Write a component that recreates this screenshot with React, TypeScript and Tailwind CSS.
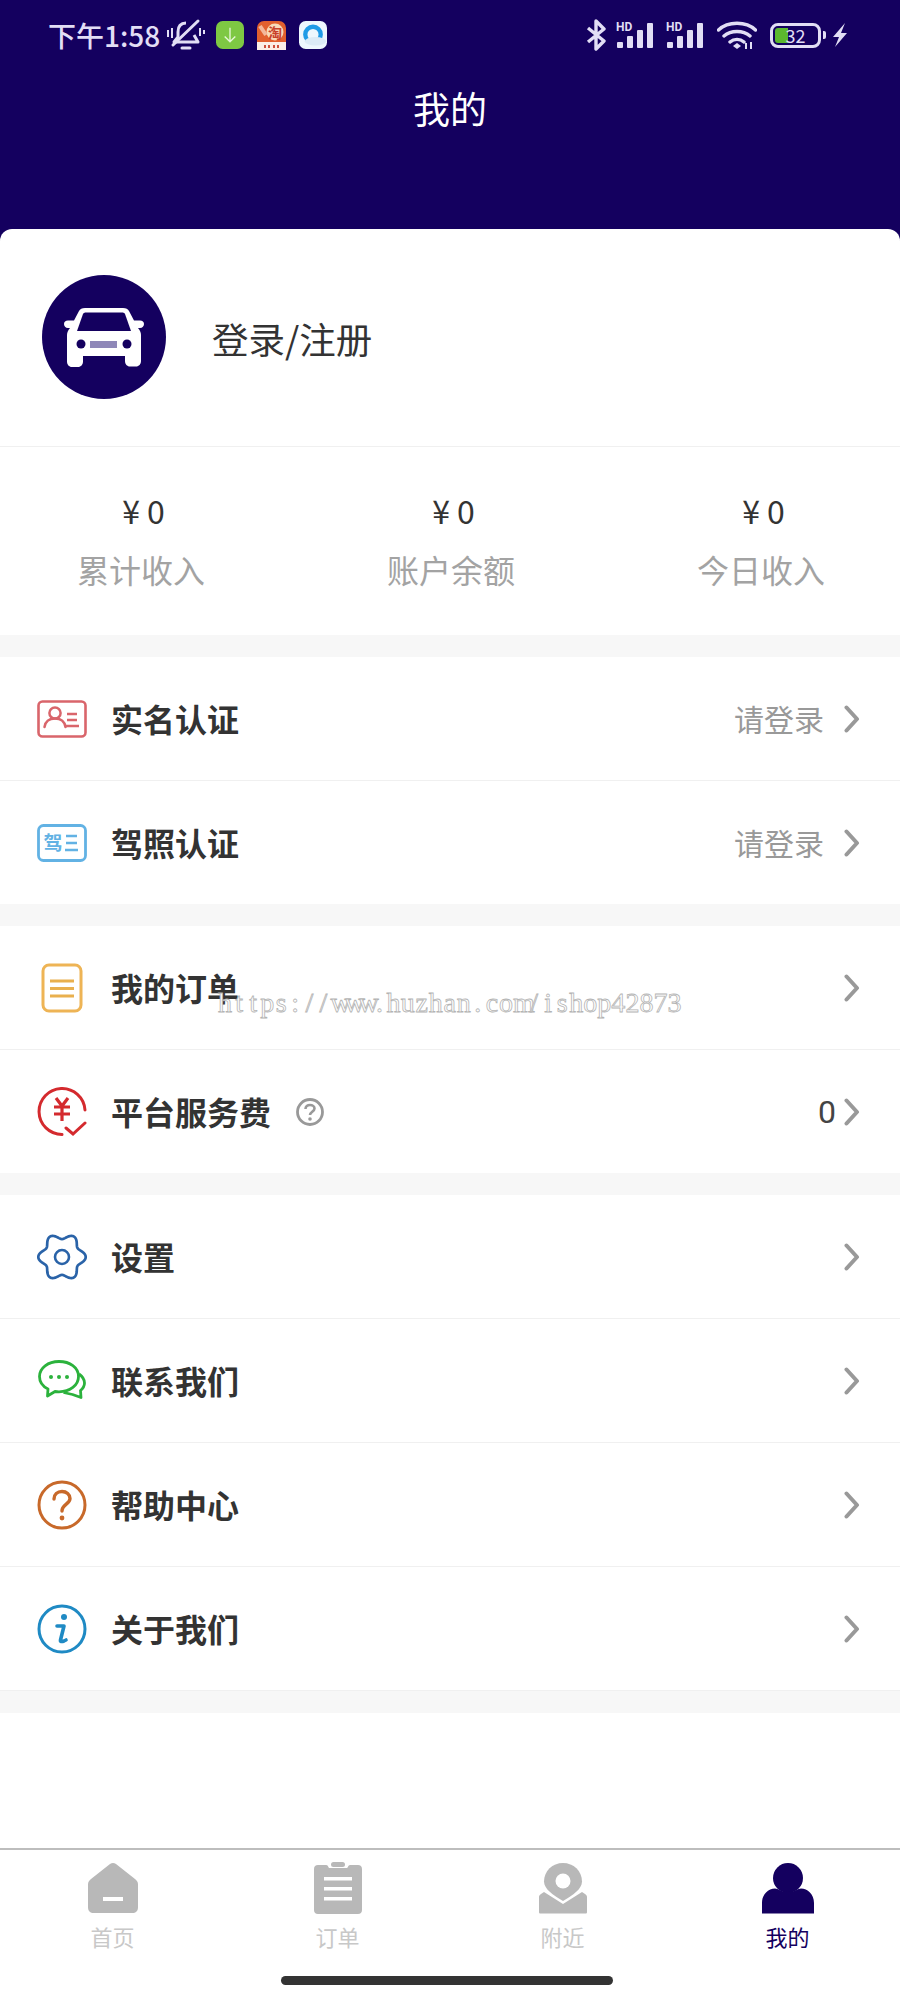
import React from 'react';

const NAVY = '#14005f';

const Chevron = () => (
  <svg width="16" height="28" viewBox="0 0 16 28" fill="none" className="shrink-0">
    <path d="M2.5 2.5 13 14 2.5 25.5" stroke="#999" strokeWidth="4" strokeLinecap="round" strokeLinejoin="round" />
  </svg>
);

const IdIcon = () => (
  <svg width="50" height="38" viewBox="0 0 50 38" fill="none">
    <rect x="1.500" y="1.500" width="47" height="35" rx="4" stroke="#d9656b" strokeWidth="2.600" />
    <circle cx="18" cy="13" r="5.600" stroke="#d9656b" strokeWidth="2.500" />
    <path d="M7.500 27c1-6 5-8.500 10.500-8.500S27.500 21 28.500 27" stroke="#d9656b" strokeWidth="2.500" strokeLinecap="round" />
    <path d="M30 14h10M30 20h10M29 26h13" stroke="#d9656b" strokeWidth="2.500" />
  </svg>
);

const LicenseIcon = () => (
  <svg width="50" height="38" viewBox="0 0 50 38" fill="none">
    <rect x="1.500" y="1.500" width="47" height="35" rx="5" stroke="#62b2e4" strokeWidth="2.800" />
    <text x="6.500" y="26" fontSize="19" fontWeight="700" fill="#62b2e4" fontFamily="'Noto Sans CJK SC', sans-serif">驾</text>
    <path d="M29 12h11M29 19h11M28 26h13" stroke="#62b2e4" strokeWidth="2.500" />
  </svg>
);

const OrderIcon = () => (
  <svg width="42" height="50" viewBox="0 0 42 50" fill="none">
    <rect x="2" y="2" width="38" height="46" rx="6" stroke="#eeb455" strokeWidth="3" />
    <path d="M9 18h24M9 25.500h24M9 33h24" stroke="#e9b04e" strokeWidth="3.200" />
  </svg>
);

const FeeIcon = () => (
  <svg width="50" height="50" viewBox="0 0 50 50" fill="none">
    <path d="M48 23A23 23 0 1 0 25 47.500" stroke="#d42a2e" strokeWidth="3" strokeLinecap="round" />
    <path d="M19 11l6 8 6-8M17 20h16M17 27h16M25 19v15" stroke="#d42a2e" strokeWidth="3.200" />
    <path d="M29 41l7 6 12-11" stroke="#d42a2e" strokeWidth="3" strokeLinecap="round" />
  </svg>
);

// wavy outline with six lobes, one of them pointing right
const gearPath = Array.from({ length: 121 }, (_, i) => {
  const a = (i / 120) * Math.PI * 2;
  const r = 20.8 + 2.9 * Math.cos(6 * a);
  return `${i === 0 ? 'M' : 'L'}${(25 + r * Math.cos(a)).toFixed(2)} ${(25 + r * Math.sin(a)).toFixed(2)}`;
}).join('') + 'Z';

const GearIcon = () => (
  <svg width="50" height="50" viewBox="0 0 50 50" fill="none">
    <path d={gearPath} stroke="#2a63a8" strokeWidth="2.700" strokeLinejoin="round" />
    <circle cx="25" cy="25" r="7" stroke="#2a63a8" strokeWidth="2.600" />
  </svg>
);

const ChatIcon = () => (
  <svg width="48" height="42" viewBox="0 0 48 42" fill="none">
    <path
      d="M21 1.500C10 1.500 1.500 8 1.500 16.500c0 5.500 3.500 10 8.500 12.500l-.5 7 7.500-4.500c1.500.2 2.500.3 4 .3 11 0 19.500-6.500 19.500-15.300S32 1.500 21 1.500z"
      stroke="#2bb23c"
      strokeWidth="2.800"
      strokeLinejoin="round"
    />
    <path d="M41 14c3.500 2.500 5.500 5.500 5.500 9 0 3-1 5-4 7.500l.5 7-8.500-3-9-2" stroke="#2bb23c" strokeWidth="2.800" strokeLinejoin="round" />
    <circle cx="13" cy="17" r="2" fill="#2bb23c" />
    <circle cx="21" cy="17" r="2" fill="#2bb23c" />
    <circle cx="29" cy="17" r="2" fill="#2bb23c" />
  </svg>
);

const HelpIcon = () => (
  <svg width="50" height="50" viewBox="0 0 50 50" fill="none">
    <circle cx="25" cy="25" r="23" stroke="#c8692a" strokeWidth="3" />
    <path d="M17 19c0-4.500 3.500-7.500 8-7.500s8 3 8 7c0 5.500-8 6-8 12.500" stroke="#c8692a" strokeWidth="3.400" strokeLinecap="round" />
    <circle cx="25" cy="38" r="2.400" fill="#c8692a" />
  </svg>
);

const InfoIcon = () => (
  <svg width="50" height="50" viewBox="0 0 50 50" fill="none">
    <circle cx="25" cy="25" r="23" stroke="#1f8ac4" strokeWidth="3" />
    <circle cx="27" cy="13" r="3" fill="#1f8ac4" />
    <path d="M20 22h7l-3.500 14c-.3 1.500 1 2 3.500 1l2-1" stroke="#1f8ac4" strokeWidth="3.600" strokeLinecap="round" strokeLinejoin="round" />
  </svg>
);

const CarIcon = () => (
  <svg width="80" height="60" viewBox="0 0 80 60" fill="none">
    <path
      d="M0 17c0-2 1.500-3.500 4-3.500h6L15 4C16 2 18 1 21 1h38c3 0 5 1 6 3l5 9.500h6c2.500 0 4 1.500 4 3.500s-1.500 4-4 4h-2c2 2.500 3 4.500 3 7v26c0 3-2 5.500-5 5.500h-6c-3 0-5-2.500-5-5.500V49H19v5.500c0 3-2 5.500-5 5.500H8c-3 0-5-2.500-5-5.500V28c0-2.500 1-4.500 3-7H4c-2.500 0-4-2-4-4z"
      fill="#fff"
    />
    <path d="M19 7c.5-1 1.500-1.500 3-1.500h36c1.500 0 2.500.5 3 1.500l6 17H13z" fill={NAVY} />
    <circle cx="17" cy="37" r="4.500" fill={NAVY} />
    <circle cx="63" cy="37" r="4.500" fill={NAVY} />
    <rect x="26" y="34" width="27" height="7" fill="#8f88b8" />
  </svg>
);

const HomeTab = () => (
  <svg width="50" height="52" viewBox="0 0 50 52">
    <path d="M25 1c1 0 2 .4 3 1l19 15c2 1.500 3 3 3 5.500V45c0 4-2 6-6 6H6c-4 0-6-2-6-6V22.500C0 20 1 18.500 3 17L22 2c1-.6 2-1 3-1z" fill="#b8b8b8" />
    <rect x="15" y="35" width="20" height="4" fill="#fff" />
  </svg>
);

const OrderTab = () => (
  <svg width="48" height="52" viewBox="0 0 48 52">
    <path d="M4 3h8c2 0 2 1.500 3 3h18c1 0 1-3 3-3h8c2.500 0 4 1.500 4 4v41c0 2.500-1.500 4-4 4H4c-2.500 0-4-1.500-4-4V7c0-2.500 1.500-4 4-4z" fill="#b8b8b8" />
    <rect x="17" y="0" width="14" height="5" rx="2.500" fill="#b8b8b8" />
    <rect x="10" y="15" width="28" height="3.500" fill="#fff" />
    <rect x="10" y="25" width="28" height="3.500" fill="#fff" />
    <rect x="10" y="35" width="28" height="3.500" fill="#fff" />
  </svg>
);

const NearbyTab = () => (
  <svg width="48" height="52" viewBox="0 0 48 52">
    <path d="M0 50V35c0-1 .5-2 2-3l3-2 19 12 19-12 3 2c1.500 1 2 2 2 3v15c0 1-.5 1.500-1.500 1.500h-45C.5 51.500 0 51 0 50z" fill="#b8b8b8" />
    <path d="M24 39C14 33 5 27 5 19.500 5 9 13.500 1 24 1s19 8 19 18.500C43 27 34 33 24 39z" fill="#b8b8b8" />
    <circle cx="24" cy="19" r="7.500" fill="#fff" />
  </svg>
);

const MineTab = () => (
  <svg width="52" height="52" viewBox="0 0 52 52">
    <circle cx="26" cy="16" r="15" fill={NAVY} />
    <path d="M0 51.500V41c0-9 6.500-14.500 13-14.500 3 0 6 3.500 13 3.500s10-3.500 13-3.500c6.500 0 13 5.500 13 14.500v10.500z" fill={NAVY} />
  </svg>
);

const SignalIcon = () => (
  <div className="relative ml-[10px] h-[26px] w-[40px]">
    <span className="absolute left-0 top-[-1px] text-[12px] font-bold leading-none" style={{ fontFamily: 'Roboto, sans-serif' }}>HD</span>
    <div className="absolute bottom-0 left-[1px] flex items-end gap-[4px]">
      <div className="h-[6px] w-[6px] rounded-[1px] bg-[#e2def5]" />
      <div className="h-[12px] w-[6px] rounded-[1px] bg-[#e2def5]" />
      <div className="h-[18px] w-[6px] rounded-[1px] bg-[#e2def5]" />
      <div className="h-[25px] w-[6px] rounded-[1px] bg-[#e2def5]" />
    </div>
  </div>
);

const StatusBar = () => (
  <div className="flex h-[70px] items-center justify-between pl-[48px] pr-[52px] text-[#e2def5]">
    <div className="flex items-center">
      <span className="text-[28px] font-medium leading-none">下午1:58</span>
      <svg width="38" height="34" viewBox="0 0 38 34" fill="none" className="ml-[7px]">
        <path d="M19 5c-6 0-8 4-8 9v5l-4 5h24l-4-7" stroke="#e2def5" strokeWidth="3" strokeLinejoin="round" />
        <path d="M6 27 31 3M15 30h8" stroke="#e2def5" strokeWidth="3" strokeLinecap="round" />
        <path d="M1 12v7M5 10v10M33 10v8M37 12v4" stroke="#e2def5" strokeWidth="2" />
      </svg>
      <svg width="28" height="28" viewBox="0 0 29 29" fill="none" className="ml-[11px]">
        <rect width="29" height="29" rx="7" fill="#7ec843" />
        <path d="M14.500 7v14M9 16l5.500 5.500L20 16" stroke="#e5f7d6" strokeWidth="1.400" />
      </svg>
      <svg width="29" height="29" viewBox="0 0 29 29" fill="none" className="ml-[13px]">
        <rect width="29" height="29" rx="7" fill="#e2602e" />
        <rect y="21" width="29" height="8" fill="#fbeee6" />
        <circle cx="18" cy="11" r="8.500" fill="#f8d9b8" />
        <text x="11" y="17" fontSize="14" fontWeight="700" fill="#c8402a" fontFamily="'Noto Sans CJK SC', sans-serif">淘</text>
        <path d="M3 5l6 9" stroke="#f3b79a" strokeWidth="4" />
        <path d="M8 24v3M12 24v3M17 24v3M21 24v3" stroke="#c8402a" strokeWidth="1.800" />
      </svg>
      <svg width="28" height="28" viewBox="0 0 29 29" fill="none" className="ml-[13px]">
        <rect width="29" height="29" rx="7" fill="#eef7fd" />
        <circle cx="14.500" cy="14" r="8" stroke="#1f9be6" strokeWidth="4.500" />
        <ellipse cx="17" cy="21" rx="11" ry="4.500" fill="#dcebf6" />
      </svg>
    </div>
    <div className="flex items-center">
      <svg width="20" height="32" viewBox="0 0 20 32" fill="none">
        <path d="M2 9l16 13-8 8V2l8 8L2 23" stroke="#e2def5" strokeWidth="3.400" strokeLinejoin="round" />
      </svg>
      <SignalIcon />
      <SignalIcon />
      <svg width="40" height="30" viewBox="0 0 40 30" fill="none" className="ml-[11px]">
        <path d="M1.500 10C11 1 29 1 38.500 10M7 16c7-6 19-6 26 0M13 22c4-3.500 10-3.500 14 0" stroke="#e2def5" strokeWidth="3.400" strokeLinecap="round" />
        <path d="M16 26l4-3 4 3-4 3z" fill="#e2def5" />
        <path d="M29 29v-6M34 29v-7" stroke="#e2def5" strokeWidth="2" />
      </svg>
      <div className="relative ml-[13px] h-[25px] w-[51px] rounded-[8px] border-[3px] border-[#e2def5]">
        <div className="absolute bottom-[2px] left-[2px] top-[2px] w-[13px] rounded-l-[3px] bg-[#5cb82e]" />
        <span className="absolute inset-0 flex items-center justify-center text-[18px] leading-none">32</span>
      </div>
      <div className="ml-[2px] h-[8px] w-[3px] rounded-r-[2px] bg-[#e2def5]" />
      <svg width="16" height="24" viewBox="0 0 16 24" className="ml-[6px]">
        <path d="M13 0 1 14h6L3 24l12-14H9z" fill="#e2def5" />
      </svg>
    </div>
  </div>
);

const Divider = () => <div className="h-[1px] bg-[#f0f0f0]" />;
const Gap = () => <div className="h-[22px] bg-[#f7f7f7]" />;

type RowProps = {
  icon: React.ReactNode;
  title: string;
  right?: string;
  hint?: boolean;
  value?: string;
};

const Row = ({ icon, title, right, hint, value }: RowProps) => (
  <div className="flex h-[123px] items-center pl-[37px] pr-[40px]">
    <div className="flex w-[50px] shrink-0 justify-center">{icon}</div>
    <span className="ml-[24px] pb-[2px] text-[32px] font-bold leading-none text-[#333]">{title}</span>
    {hint && (
      <svg width="30" height="30" viewBox="0 0 30 30" fill="none" className="ml-[24px]">
        <circle cx="15" cy="15" r="12.500" stroke="#999" strokeWidth="2.800" />
        <path d="M10.500 12c0-2.500 2-4 4.500-4s4.500 1.500 4.500 3.500c0 3-4.500 3.500-4.500 6.500" stroke="#999" strokeWidth="2.600" />
        <circle cx="15" cy="22" r="1.800" fill="#999" />
      </svg>
    )}
    <div className="ml-auto flex items-center">
      {right && <span className="mr-[20px] pb-[2px] text-[30px] leading-none text-[#999]">{right}</span>}
      {value && <span className="mr-[8px] text-[32px] leading-none text-[#444]" style={{ fontFamily: 'Roboto, sans-serif' }}>{value}</span>}
      <Chevron />
    </div>
  </div>
);

const Stat = ({ label }: { label: string }) => (
  <div className="flex w-[310px] shrink-0 flex-col items-center">
    <span className="pl-[5px] text-[32px] leading-[38px] text-[#333]">¥ 0</span>
    <span className="mt-[21px] text-[32px] leading-[38px] text-[#a3a3a3]">{label}</span>
  </div>
);

const Tab = ({ icon, label, active }: { icon: React.ReactNode; label: string; active?: boolean }) => (
  <div className="flex flex-col items-center">
    <div className="flex h-[52px] items-center justify-center">{icon}</div>
    <span className={active ? 'mt-[9px] text-[22px] leading-[26px] text-[#14005f]' : 'mt-[9px] text-[22px] leading-[26px] text-[#c8c8c8]'}>{label}</span>
  </div>
);

const watermark = 'https://www.huzhan.com/ishop42873'.split('');

export default function App() {
  return (
    <div
      className="relative flex h-[2000px] w-[900px] flex-col overflow-hidden bg-[#14005f]"
      style={{ fontFamily: "'Noto Sans CJK SC', Roboto, sans-serif" }}
    >
      {/* top bar */}
      <div className="h-[229px] shrink-0">
        <StatusBar />
        <div className="mt-[14px] text-center text-[37px] leading-[48px] text-white">我的</div>
      </div>

      <div className="flex flex-1 flex-col overflow-hidden rounded-t-[12px] bg-white">
        {/* profile */}
        <div className="flex h-[217px] items-center pb-[2px] pl-[42px]">
          <div className="flex h-[124px] w-[124px] items-center justify-center rounded-full bg-[#14005f]">
            <CarIcon />
          </div>
          <span className="ml-[46px] pt-[5px] text-[36.500px] leading-none text-[#333]">登录/注册</span>
        </div>
        <Divider />

        {/* income */}
        <div className="flex h-[188px] items-start justify-center pl-[2px] pt-[44px]">
          <Stat label="累计收入" />
          <Stat label="账户余额" />
          <Stat label="今日收入" />
        </div>
        <Gap />

        <Row icon={<IdIcon />} title="实名认证" right="请登录" />
        <Divider />
        <Row icon={<LicenseIcon />} title="驾照认证" right="请登录" />
        <Gap />

        <Row icon={<OrderIcon />} title="我的订单" />
        <Divider />
        <Row icon={<FeeIcon />} title="平台服务费" hint value="0" />
        <Gap />

        <Row icon={<GearIcon />} title="设置" />
        <Divider />
        <Row icon={<ChatIcon />} title="联系我们" />
        <Divider />
        <Row icon={<HelpIcon />} title="帮助中心" />
        <Divider />
        <Row icon={<InfoIcon />} title="关于我们" />
        <Divider />
        <Gap />

        {/* tab bar */}
        <div className="mt-auto h-[152px] border-t-[2px] border-[#bdbdbd] bg-white pt-[12px]">
          <div className="grid grid-cols-4">
            <Tab icon={<HomeTab />} label="首页" />
            <Tab icon={<OrderTab />} label="订单" />
            <Tab icon={<NearbyTab />} label="附近" />
            <Tab icon={<MineTab />} label="我的" active />
          </div>
          <div className="ml-[281px] mt-[27px] h-[9px] w-[332px] rounded-full bg-[#333]" />
        </div>
      </div>

      {/* watermark over the order row */}
      <div
        className="absolute left-[218px] top-[983px] flex text-[28px] leading-[40px] text-white [-webkit-text-stroke:0.8px_#b4b4b4]"
        style={{ fontFamily: "'Liberation Serif', serif" }}
      >
        {watermark.map((c, i) => (
          <span key={i} className="w-[14.060px] text-center">{c}</span>
        ))}
      </div>
    </div>
  );
}
